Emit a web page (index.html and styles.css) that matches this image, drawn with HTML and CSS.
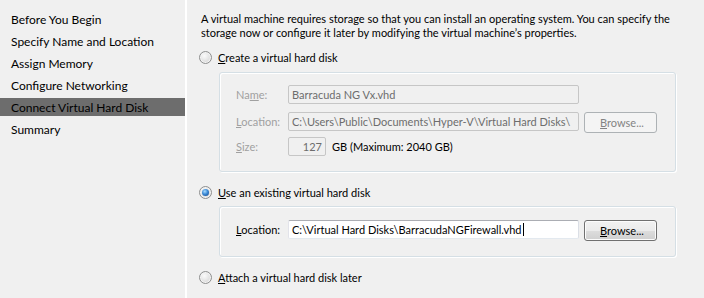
FILE: index.html
```html
<!DOCTYPE html>
<html>
<head>
<meta charset="utf-8">
<link rel="stylesheet" href="styles.css">
</head>
<body>
<div class="wizard">
  <nav class="steps">
    <div class="step">Before You Begin</div>
    <div class="step">Specify Name and Location</div>
    <div class="step">Assign Memory</div>
    <div class="step">Configure Networking</div>
    <div class="step active">Connect Virtual Hard Disk</div>
    <div class="step">Summary</div>
  </nav>
  <main class="content">
    <p class="desc">A virtual machine requires storage so that you can install an operating system. You can specify the<br>storage now or configure it later by modifying the virtual machine’s properties.</p>

    <div class="radio-row"><span class="radio"></span><span><u>C</u>reate a virtual hard disk</span></div>
    <div class="group g1">
      <div class="row">
        <span class="label disabled">Na<u>m</u>e:</span>
        <span class="input dis">Barracuda NG Vx.vhd</span>
      </div>
      <div class="row r2">
        <span class="label disabled"><u>L</u>ocation:</span>
        <span class="input dis">C:\Users\Public\Documents\Hyper-V\Virtual Hard Disks\</span>
        <span class="btn btn-dis"><u>B</u>rowse...</span>
      </div>
      <div class="row r3">
        <span class="label disabled"><u>S</u>ize:</span>
        <span class="input dis size">127</span>
        <span class="unit">GB (Maximum: 2040 GB)</span>
      </div>
    </div>

    <div class="radio-row r2r"><span class="radio on"></span><span><u>U</u>se an existing virtual hard disk</span></div>
    <div class="group g2">
      <div class="row r2">
        <span class="label"><u>L</u>ocation:</span>
        <span class="input on">C:\Virtual Hard Disks\BarracudaNGFirewall.vhd<span class="caret"></span></span>
        <span class="btn"><u>B</u>rowse...</span>
      </div>
    </div>

    <div class="radio-row r3r"><span class="radio"></span><span><u>A</u>ttach a virtual hard disk later</span></div>
  </main>
</div>
</body>
</html>
```
FILE: styles.css
```css
* { box-sizing: border-box; }
html, body { margin: 0; padding: 0; }
body {
  width: 704px;
  height: 298px;
  overflow: hidden;
  background: #f0f0f0;
  font-family: Lato, "Noto Sans", sans-serif;
  font-size: 11px;
  color: #000;
}
u { text-decoration: underline; text-underline-offset: 1px; }
.wizard { display: flex; height: 298px; }
.steps {
  width: 187px;
  flex: none;
  border-right: 2px solid #fff;
  padding-top: 10px;
  display: flex;
  flex-direction: column;
  gap: 4px;
  font-size: 12px;
}
.step {
  height: 18px;
  line-height: 19px;
  padding-left: 11px;
  white-space: nowrap;
}
.step.active { background: #6d6d6d; }
.content {
  flex: 1;
  padding-left: 12px;
  padding-top: 12px;
}
.desc {
  margin: 0 0 9px 2px;
  line-height: 14px;
  white-space: nowrap;
}
.radio-row {
  display: flex;
  align-items: center;
  height: 16px;
  gap: 6px;
  white-space: nowrap;
}
.radio {
  width: 13px;
  height: 13px;
  border-radius: 50%;
  border: 1px solid #8e8f8f;
  background: radial-gradient(circle at 40% 35%, #fbfbfb 0%, #e6e6e6 45%, #cfcfcf 100%);
  box-shadow: inset 0 0 0 1px #f4f4f4;
  position: relative;
  flex: none;
}
.radio.on::after {
  content: "";
  position: absolute;
  left: 2px; top: 2px;
  width: 7px; height: 7px;
  border-radius: 50%;
  background: radial-gradient(circle at 40% 35%, #a9dcff 0%, #3c8ad6 45%, #0f3e83 100%);
}
.group {
  margin-left: 20px;
  width: 457px;
  border: 1px solid #d5dfe5;
  border-radius: 3px;
  box-shadow: 1px 1px 0 #fff, inset 1px 1px 0 #fff;
  padding-left: 16px;
}
.g1 { margin-top: 7px; padding-top: 12px; height: 100px; }
.g2 { margin-top: 6px; padding-top: 13px; height: 51px; }
.r2r { margin-top: 12px; }
.r3r { margin-top: 12px; }
.row { display: flex; align-items: flex-start; height: 19px; }
.row.r2 { height: 20px; margin-top: 8px; }
.g2 .row.r2 { margin-top: 0; }
.row.r3 { margin-top: 5px; }
.label {
  width: 52px;
  flex: none;
  line-height: 19px;
  white-space: nowrap;
}
.label.disabled { color: #a0a0a0; }
.input {
  width: 291px;
  height: 19px;
  line-height: 17px;
  padding-left: 3px;
  border: 1px solid #c3c3c3;
  border-radius: 2px;
  white-space: nowrap;
  overflow: hidden;
  flex: none;
}
.input.dis { background: #f0f0f0; color: #6d6d6d; border-color: #c6c6c6; }
.input.on {
  background: #fff;
  border-color: #abadb3 #dbdfe6 #e3e9ef #e2e3ea;
  display: flex;
  align-items: center;
}
.caret { display: inline-block; width: 1px; height: 13px; background: #000; margin-left: 1px; }
.input.size { width: 38px; text-align: right; padding-right: 3px; padding-left: 0; }
.unit { margin-left: 6px; line-height: 19px; white-space: nowrap; }
.btn {
  margin-left: 5px;
  width: 73px;
  height: 21px;
  flex: none;
  border: 1px solid #707070;
  border-radius: 3px;
  background: linear-gradient(#f2f2f2 0%, #ebebeb 50%, #dddddd 51%, #cfcfcf 100%);
  box-shadow: inset 0 0 0 1px #fcfcfc;
  text-align: center;
  line-height: 19px;
  padding-left: 3px;
  white-space: nowrap;
}
.btn-dis {
  border-color: #adb2b5;
  background: #f4f4f4;
  box-shadow: none;
  color: #838383;
}
```
